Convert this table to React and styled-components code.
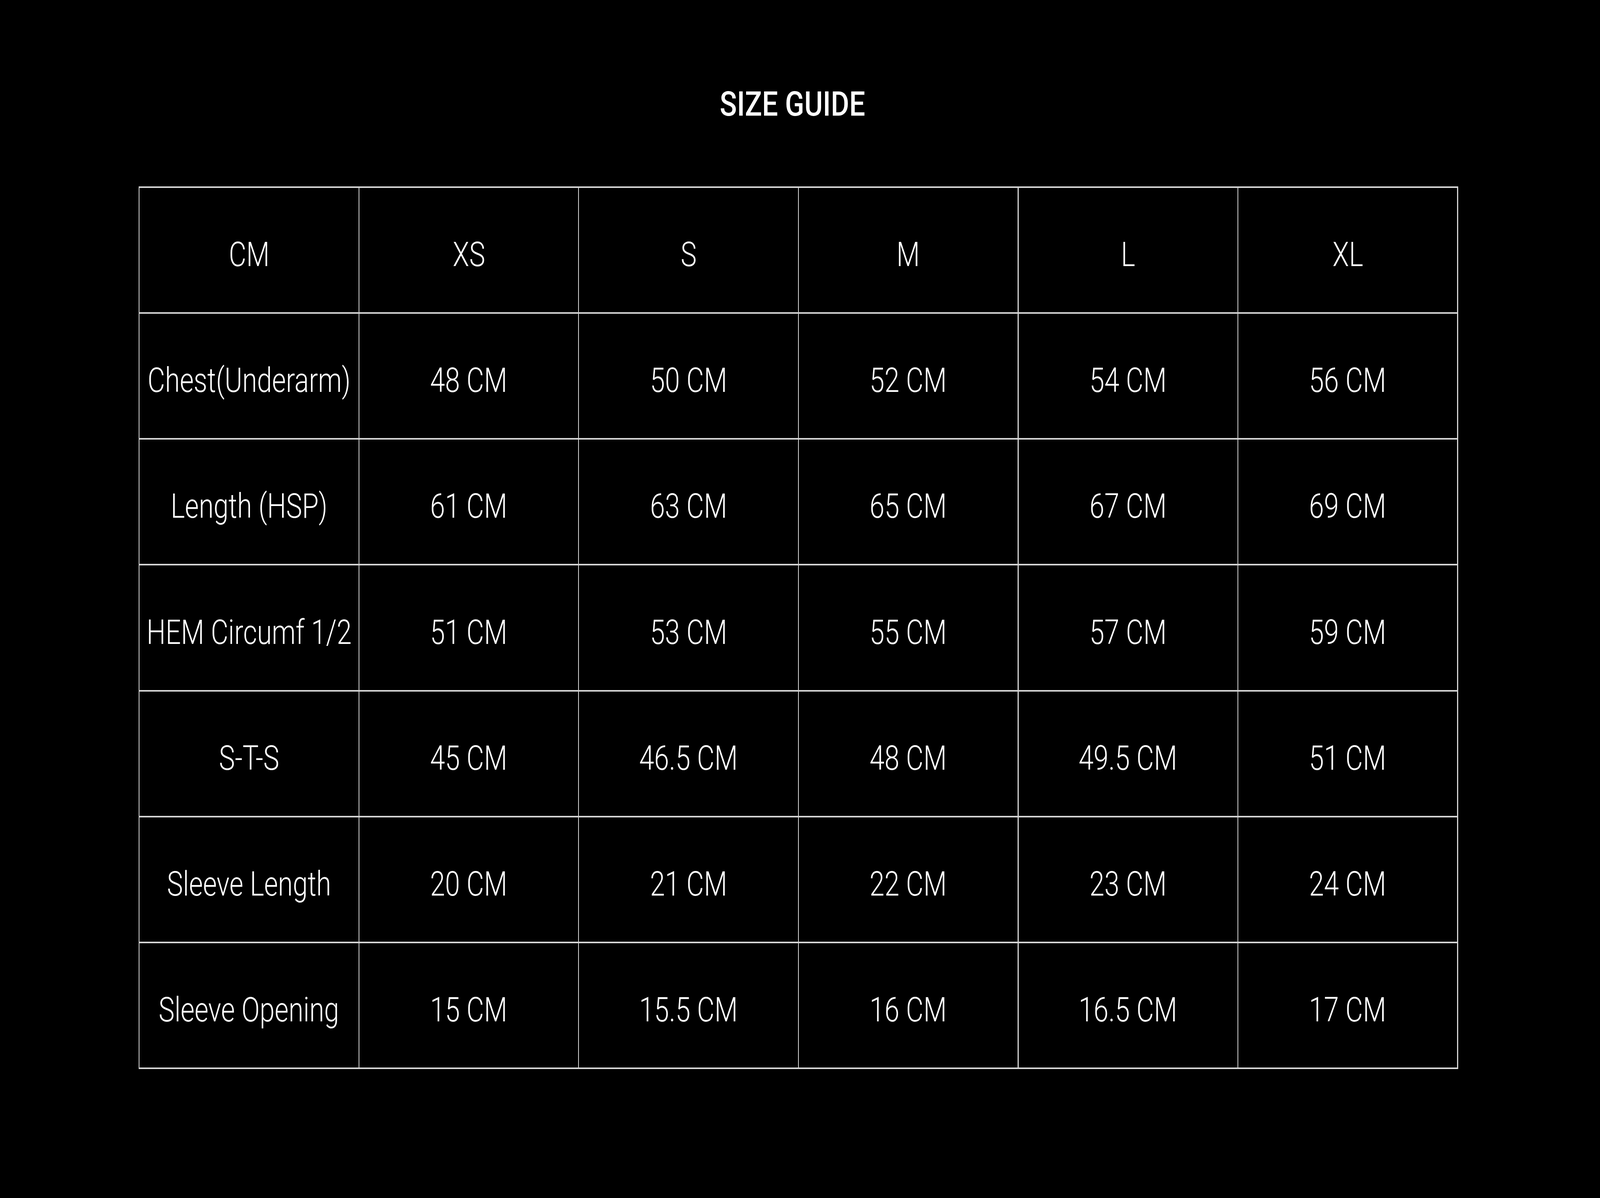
import React, { useEffect, useState } from 'react'
import styled, { createGlobalStyle } from 'styled-components'

// Reference frame the layout was measured in
const REF_W = 6991
const REF_H = 3066

const GlobalStyle = createGlobalStyle`
  html, body {
    margin: 0;
    padding: 0;
    background: #000;
    overflow: hidden;
  }
  body {
    font-family: Roboto, "Liberation Sans", sans-serif;
    color: #fff;
  }
`

const sizes = ['XS', 'S', 'M', 'L', 'XL']

const rows = [
  ['Chest(Underarm)', '48 CM', '50 CM', '52 CM', '54 CM', '56 CM'],
  ['Length (HSP)', '61 CM', '63 CM', '65 CM', '67 CM', '69 CM'],
  ['HEM Circumf 1/2', '51 CM', '53 CM', '55 CM', '57 CM', '59 CM'],
  ['S-T-S', '45 CM', '46.5 CM', '48 CM', '49.5 CM', '51 CM'],
  ['Sleeve Length', '20 CM', '21 CM', '22 CM', '23 CM', '24 CM'],
  ['Sleeve Opening', '15 CM', '15.5 CM', '16 CM', '16.5 CM', '17 CM']
]

// the artwork is wider than the font, and the window may not keep the
// reference aspect, so the horizontal stretch is worked out at runtime
const useAspect = () => {
  const read = () =>
    window.innerWidth / REF_W / (window.innerHeight / REF_H)
  const [aspect, setAspect] = useState(read)
  useEffect(() => {
    const onResize = () => setAspect(read())
    window.addEventListener('resize', onResize)
    return () => window.removeEventListener('resize', onResize)
  }, [])
  return aspect
}

const Page = styled.div`
  width: 100vw;
  height: 100vh;
  background: #000;
  box-sizing: border-box;
  padding: 6.72vh 0 0 8.668vw;
`

const Title = styled.h1`
  margin: 0;
  width: 82.46vw;
  height: 3.91vh;
  box-sizing: border-box;
  padding-right: 0.75vw;
  display: flex;
  align-items: center;
  justify-content: center;
  font-size: 2.84vh;
  font-weight: 500;
  color: #fff;
`

const Stretch = styled.span`
  display: inline-block;
  white-space: nowrap;
  transform-origin: center;
`

const Grid = styled.div`
  margin-top: 4.93vh;
  width: 82.46vw;
  height: 73.68vh;
  box-sizing: border-box;
  display: grid;
  grid-template-columns: repeat(6, minmax(0, 1fr));
  grid-template-rows: repeat(7, minmax(0, 1fr));
  gap: 0.13vh 0.0572vw;
  padding: 0.13vh 0.0572vw;
  background: #d6d6d6;
`

const Cell = styled.div`
  min-width: 0;
  background: #000;
  display: flex;
  align-items: center;
  justify-content: center;
  padding-top: 0.72vh;
  box-sizing: border-box;
  font-size: 2.84vh;
  font-weight: 300;
  color: #fff;
`

const Text = ({ children, base, aspect }) => (
  <Stretch style={{ transform: `scaleX(${base * aspect})` }}>{children}</Stretch>
)

const App = () => {
  const aspect = useAspect()
  return (
    <Page>
      <GlobalStyle />
      <Title>
        <Text base={1.42} aspect={aspect}>
          SIZE GUIDE
        </Text>
      </Title>
      <Grid>
        <Cell>
          <Text base={1.35} aspect={aspect}>
            CM
          </Text>
        </Cell>
        {sizes.map(s => (
          <Cell key={s}>
            <Text base={1.35} aspect={aspect}>
              {s}
            </Text>
          </Cell>
        ))}
        {rows.map(r =>
          r.map((v, i) => (
            <Cell key={r[0] + i}>
              <Text base={1.35} aspect={aspect}>
                {v}
              </Text>
            </Cell>
          ))
        )}
      </Grid>
    </Page>
  )
}

export default App
